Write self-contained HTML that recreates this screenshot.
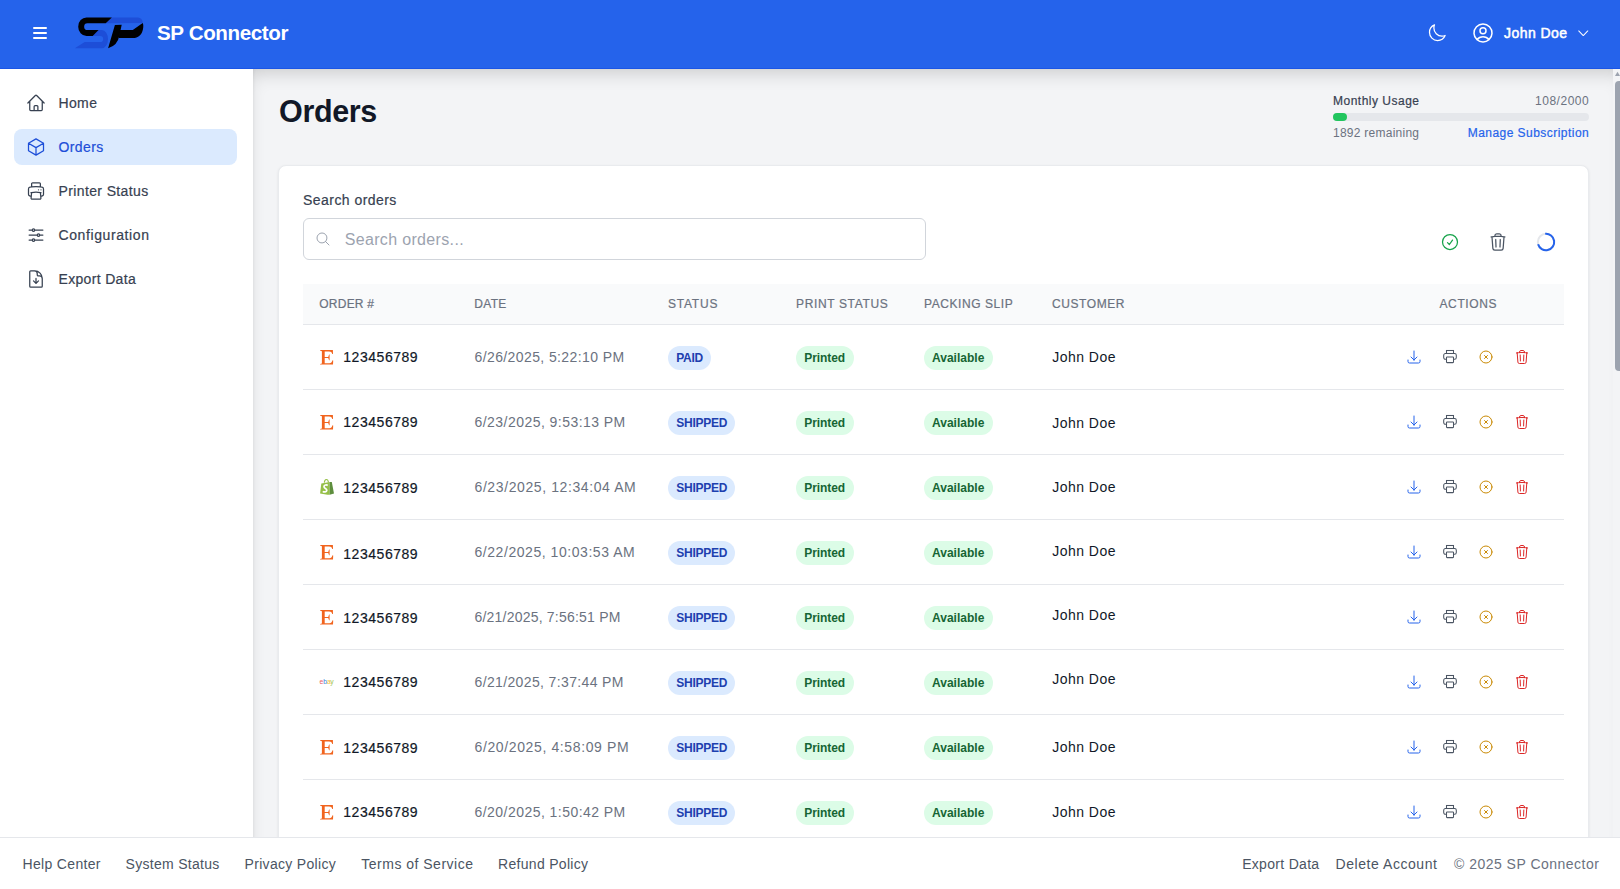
<!DOCTYPE html>
<html><head><meta charset="utf-8"><title>Orders - SP Connector</title>
<style>
html,body{margin:0;padding:0;width:1620px;height:889px;overflow:hidden;background:#f3f4f6;}
body{position:relative;font-family:"Liberation Sans",sans-serif;}
.a{position:absolute;}
.t{position:absolute;white-space:nowrap;line-height:normal;}
</style></head><body>
<div class="a" style="left:253px;top:69px;width:1367px;height:820px;background:#f3f4f6;box-shadow:inset 0 10px 20px -8px rgba(0,0,0,0.2), inset 2px 0 3px -1px rgba(0,0,0,0.05);"></div>
<div class="t" style="left:279.00px;top:93.81px;font-size:30.5px;color:#111827;letter-spacing:-0.346px;font-weight:700;">Orders</div>
<div class="t" style="left:1333.00px;top:93.95px;font-size:12px;color:#374151;letter-spacing:0.497px;-webkit-text-stroke:0.2px currentColor;">Monthly Usage</div>
<div class="t" style="left:1535.00px;top:93.95px;font-size:12px;color:#6b7280;letter-spacing:0.524px;">108/2000</div>
<div class="a" style="left:1333px;top:113px;width:256px;height:8px;background:#e5e7eb;border-radius:4px;"></div>
<div class="a" style="left:1333px;top:113px;width:14px;height:8px;background:#22c55e;border-radius:4px;"></div>
<div class="t" style="left:1333.00px;top:125.95px;font-size:12px;color:#6b7280;letter-spacing:0.252px;">1892 remaining</div>
<div class="t" style="left:1467.70px;top:125.95px;font-size:12px;color:#2563eb;letter-spacing:0.460px;-webkit-text-stroke:0.2px currentColor;">Manage Subscription</div>
<div class="a" style="left:278px;top:165px;width:1311px;height:740px;background:#fff;border:1px solid #e9ebee;box-sizing:border-box;border-radius:8px;box-shadow:0 1px 3px rgba(0,0,0,0.08);"></div>
<div class="t" style="left:303.00px;top:192.11px;font-size:14px;color:#374151;letter-spacing:0.451px;-webkit-text-stroke:0.2px currentColor;">Search orders</div>
<div class="a" style="left:303px;top:218px;width:623px;height:42px;border:1px solid #d1d5db;box-sizing:border-box;border-radius:6px;background:#fff;"></div>
<svg class="a" style="left:315px;top:231px" width="16" height="16" viewBox="0 0 24 24" fill="none" stroke="#9ca3af" stroke-width="1.5" stroke-linecap="round" stroke-linejoin="round"><path d="m21 21-5.197-5.197m0 0A7.5 7.5 0 1 0 5.196 5.196a7.5 7.5 0 0 0 10.607 10.607Z"/></svg>
<div class="t" style="left:344.70px;top:231.06px;font-size:16px;color:#9ca3af;letter-spacing:0.340px;">Search orders...</div>
<svg class="a" style="left:1440px;top:232px" width="20" height="20" viewBox="0 0 24 24" fill="none" stroke="#16a34a" stroke-width="1.5" stroke-linecap="round" stroke-linejoin="round"><path d="M9 12.75 11.25 15 15 9.75M21 12a9 9 0 1 1-18 0 9 9 0 0 1 18 0Z"/></svg>
<svg class="a" style="left:1488px;top:232px" width="20" height="20" viewBox="0 0 24 24" fill="none" stroke="#4b5563" stroke-width="1.5" stroke-linecap="round" stroke-linejoin="round"><path d="m14.74 9-.346 9m-4.788 0L9.26 9m9.968-3.21c.342.052.682.107 1.022.166m-1.022-.165L18.16 19.673a2.25 2.25 0 0 1-2.244 2.077H8.084a2.25 2.25 0 0 1-2.244-2.077L4.772 5.79m14.456 0a48.108 48.108 0 0 0-3.478-.397m-12 .562c.34-.059.68-.114 1.022-.165m0 0a48.11 48.11 0 0 1 3.478-.397m7.5 0v-.916c0-1.18-.91-2.164-2.09-2.201a51.964 51.964 0 0 0-3.32 0c-1.18.037-2.09 1.022-2.09 2.201v.916m7.5 0a48.667 48.667 0 0 0-7.5 0"/></svg>
<svg class="a" style="left:1536px;top:232px" width="20" height="20" viewBox="0 0 20 20"><circle cx="10" cy="10" r="8.2" fill="none" stroke="#e5e7eb" stroke-width="2"/><path d="M9.2 1.84 A8.2 8.2 0 1 1 2.1 12.2" fill="none" stroke="#2563eb" stroke-width="2"/></svg>
<div class="a" style="left:303px;top:284px;width:1261px;height:40px;background:#f9fafb;"></div>
<div class="a" style="left:303px;top:324px;width:1261px;height:1px;background:#e5e7eb;"></div>
<div class="t" style="left:319.30px;top:297.25px;font-size:12px;color:#6b7280;letter-spacing:0.226px;-webkit-text-stroke:0.2px currentColor;">ORDER #</div>
<div class="t" style="left:474.30px;top:297.25px;font-size:12px;color:#6b7280;letter-spacing:0.297px;-webkit-text-stroke:0.2px currentColor;">DATE</div>
<div class="t" style="left:668.00px;top:297.25px;font-size:12px;color:#6b7280;letter-spacing:0.771px;-webkit-text-stroke:0.2px currentColor;">STATUS</div>
<div class="t" style="left:796.00px;top:297.25px;font-size:12px;color:#6b7280;letter-spacing:0.640px;-webkit-text-stroke:0.2px currentColor;">PRINT STATUS</div>
<div class="t" style="left:924.00px;top:297.25px;font-size:12px;color:#6b7280;letter-spacing:0.569px;-webkit-text-stroke:0.2px currentColor;">PACKING SLIP</div>
<div class="t" style="left:1052.00px;top:297.25px;font-size:12px;color:#6b7280;letter-spacing:0.578px;-webkit-text-stroke:0.2px currentColor;">CUSTOMER</div>
<div class="t" style="left:1439.50px;top:297.25px;font-size:12px;color:#6b7280;letter-spacing:0.612px;-webkit-text-stroke:0.2px currentColor;">ACTIONS</div>
<div class="a" style="left:303px;top:389px;width:1261px;height:1px;background:#e5e7eb;"></div>
<svg class="a" style="left:320px;top:349.5px" width="14" height="15" viewBox="0 0 14 15"><path d="M0.2,0.1 L12.9,0 L13,4 L12.3,4.1 C11.8,2.1 11,1.4 9,1.4 L4.7,1.4 L4.7,7 L8.2,7 L9.1,4.6 L9.6,4.6 L9.6,10.2 L9.1,10.2 L8.2,7.9 L4.7,7.9 L4.7,13.25 L9.3,13.25 C11.2,13.25 11.9,12.4 12.5,10.3 L13.2,10.4 L13,14.6 L0.1,14.6 L0.1,13.95 L1.9,13.4 L1.9,1.2 L0.2,0.75 Z" fill="#f1641e"/></svg>
<div class="t" style="left:343.30px;top:349.11px;font-size:14px;color:#111827;letter-spacing:0.534px;-webkit-text-stroke:0.2px currentColor;">123456789</div>
<div class="t" style="left:474.50px;top:348.81px;font-size:14px;color:#6b7280;letter-spacing:0.395px;">6/26/2025, 5:22:10 PM</div>
<div class="a" style="left:668px;top:346px;width:43px;height:24px;background:#dbeafe;border-radius:12px;"></div>
<div class="t" style="left:676.20px;top:351.15px;font-size:12px;color:#1e40af;letter-spacing:-0.260px;font-weight:700;">PAID</div>
<div class="a" style="left:796px;top:346px;width:58px;height:24px;background:#dcfce7;border-radius:12px;"></div>
<div class="t" style="left:804.20px;top:351.15px;font-size:12px;color:#166534;letter-spacing:-0.055px;font-weight:700;">Printed</div>
<div class="a" style="left:924px;top:346px;width:69px;height:24px;background:#dcfce7;border-radius:12px;"></div>
<div class="t" style="left:932.00px;top:351.15px;font-size:12px;color:#166534;letter-spacing:0.008px;font-weight:700;">Available</div>
<div class="t" style="left:1052.20px;top:349.01px;font-size:14px;color:#111827;letter-spacing:0.485px;">John Doe</div>
<svg class="a" style="left:1406px;top:349.3px" width="16" height="16" viewBox="0 0 24 24" fill="none" stroke="#2563eb" stroke-width="1.5" stroke-linecap="round" stroke-linejoin="round"><path d="M3 16.5v2.25A2.25 2.25 0 0 0 5.25 21h13.5A2.25 2.25 0 0 0 21 18.75V16.5M16.5 12 12 16.5m0 0L7.5 12m4.5 4.5V3"/></svg>
<svg class="a" style="left:1442px;top:348.3px" width="16" height="16" viewBox="0 0 16 16" fill="none" stroke="#4b5563" stroke-width="1.05"><rect x="4.5" y="2.5" width="7" height="3"/><path d="M4.5,11.3 H3.4 A1.7,1.7 0 0 1 1.7,9.6 V7.2 A1.7,1.7 0 0 1 3.4,5.5 H12.6 A1.7,1.7 0 0 1 14.3,7.2 V9.6 A1.7,1.7 0 0 1 12.6,11.3 H11.5"/><rect x="4.5" y="9" width="7" height="5.6" rx="0.6"/></svg>
<svg class="a" style="left:1478px;top:349px" width="16" height="16" viewBox="0 0 24 24" fill="none" stroke="#ca8a04" stroke-width="1.5" stroke-linecap="round" stroke-linejoin="round"><path d="m9.75 9.75 4.5 4.5m0-4.5-4.5 4.5M21 12a9 9 0 1 1-18 0 9 9 0 0 1 18 0Z"/></svg>
<svg class="a" style="left:1514px;top:349px" width="16" height="16" viewBox="0 0 24 24" fill="none" stroke="#dc2626" stroke-width="1.5" stroke-linecap="round" stroke-linejoin="round"><path d="m14.74 9-.346 9m-4.788 0L9.26 9m9.968-3.21c.342.052.682.107 1.022.166m-1.022-.165L18.16 19.673a2.25 2.25 0 0 1-2.244 2.077H8.084a2.25 2.25 0 0 1-2.244-2.077L4.772 5.79m14.456 0a48.108 48.108 0 0 0-3.478-.397m-12 .562c.34-.059.68-.114 1.022-.165m0 0a48.11 48.11 0 0 1 3.478-.397m7.5 0v-.916c0-1.18-.91-2.164-2.09-2.201a51.964 51.964 0 0 0-3.32 0c-1.18.037-2.09 1.022-2.09 2.201v.916m7.5 0a48.667 48.667 0 0 0-7.5 0"/></svg>
<div class="a" style="left:303px;top:454px;width:1261px;height:1px;background:#e5e7eb;"></div>
<svg class="a" style="left:320px;top:414.5px" width="14" height="15" viewBox="0 0 14 15"><path d="M0.2,0.1 L12.9,0 L13,4 L12.3,4.1 C11.8,2.1 11,1.4 9,1.4 L4.7,1.4 L4.7,7 L8.2,7 L9.1,4.6 L9.6,4.6 L9.6,10.2 L9.1,10.2 L8.2,7.9 L4.7,7.9 L4.7,13.25 L9.3,13.25 C11.2,13.25 11.9,12.4 12.5,10.3 L13.2,10.4 L13,14.6 L0.1,14.6 L0.1,13.95 L1.9,13.4 L1.9,1.2 L0.2,0.75 Z" fill="#f1641e"/></svg>
<div class="t" style="left:343.30px;top:413.81px;font-size:14px;color:#111827;letter-spacing:0.534px;-webkit-text-stroke:0.2px currentColor;">123456789</div>
<div class="t" style="left:474.50px;top:413.81px;font-size:14px;color:#6b7280;letter-spacing:0.455px;">6/23/2025, 9:53:13 PM</div>
<div class="a" style="left:668px;top:411px;width:67px;height:24px;background:#dbeafe;border-radius:12px;"></div>
<div class="t" style="left:676.20px;top:416.15px;font-size:12px;color:#1e40af;letter-spacing:-0.229px;font-weight:700;">SHIPPED</div>
<div class="a" style="left:796px;top:411px;width:58px;height:24px;background:#dcfce7;border-radius:12px;"></div>
<div class="t" style="left:804.20px;top:416.15px;font-size:12px;color:#166534;letter-spacing:-0.055px;font-weight:700;">Printed</div>
<div class="a" style="left:924px;top:411px;width:69px;height:24px;background:#dcfce7;border-radius:12px;"></div>
<div class="t" style="left:932.00px;top:416.15px;font-size:12px;color:#166534;letter-spacing:0.008px;font-weight:700;">Available</div>
<div class="t" style="left:1052.20px;top:414.81px;font-size:14px;color:#111827;letter-spacing:0.485px;">John Doe</div>
<svg class="a" style="left:1406px;top:414.3px" width="16" height="16" viewBox="0 0 24 24" fill="none" stroke="#2563eb" stroke-width="1.5" stroke-linecap="round" stroke-linejoin="round"><path d="M3 16.5v2.25A2.25 2.25 0 0 0 5.25 21h13.5A2.25 2.25 0 0 0 21 18.75V16.5M16.5 12 12 16.5m0 0L7.5 12m4.5 4.5V3"/></svg>
<svg class="a" style="left:1442px;top:413.3px" width="16" height="16" viewBox="0 0 16 16" fill="none" stroke="#4b5563" stroke-width="1.05"><rect x="4.5" y="2.5" width="7" height="3"/><path d="M4.5,11.3 H3.4 A1.7,1.7 0 0 1 1.7,9.6 V7.2 A1.7,1.7 0 0 1 3.4,5.5 H12.6 A1.7,1.7 0 0 1 14.3,7.2 V9.6 A1.7,1.7 0 0 1 12.6,11.3 H11.5"/><rect x="4.5" y="9" width="7" height="5.6" rx="0.6"/></svg>
<svg class="a" style="left:1478px;top:414px" width="16" height="16" viewBox="0 0 24 24" fill="none" stroke="#ca8a04" stroke-width="1.5" stroke-linecap="round" stroke-linejoin="round"><path d="m9.75 9.75 4.5 4.5m0-4.5-4.5 4.5M21 12a9 9 0 1 1-18 0 9 9 0 0 1 18 0Z"/></svg>
<svg class="a" style="left:1514px;top:414px" width="16" height="16" viewBox="0 0 24 24" fill="none" stroke="#dc2626" stroke-width="1.5" stroke-linecap="round" stroke-linejoin="round"><path d="m14.74 9-.346 9m-4.788 0L9.26 9m9.968-3.21c.342.052.682.107 1.022.166m-1.022-.165L18.16 19.673a2.25 2.25 0 0 1-2.244 2.077H8.084a2.25 2.25 0 0 1-2.244-2.077L4.772 5.79m14.456 0a48.108 48.108 0 0 0-3.478-.397m-12 .562c.34-.059.68-.114 1.022-.165m0 0a48.11 48.11 0 0 1 3.478-.397m7.5 0v-.916c0-1.18-.91-2.164-2.09-2.201a51.964 51.964 0 0 0-3.32 0c-1.18.037-2.09 1.022-2.09 2.201v.916m7.5 0a48.667 48.667 0 0 0-7.5 0"/></svg>
<div class="a" style="left:303px;top:519px;width:1261px;height:1px;background:#e5e7eb;"></div>
<svg class="a" style="left:319px;top:478px" width="16" height="18" viewBox="0 0 16 18"><path d="M5.3,4.6 C5.5,2.4 6.3,1.5 7.3,1.5 C8.4,1.5 9.2,2.4 9.5,4.4" fill="none" stroke="#95bf47" stroke-width="1.1"/><path d="M2.3,5.4 L10.6,3.9 L10.6,16.7 L8.5,16.7 L1.1,15.4 Z" fill="#95bf47"/><path d="M10.6,3.9 L12.8,4.1 L15,15.6 L10.6,16.7 Z" fill="#5e8e3e"/><path d="M8.7,7.5 C7.7,6.6 5.1,6.8 5,8.6 C4.9,10.5 8,10.4 7.8,12.3 C7.6,14.2 5,14.3 3.8,13.3" fill="none" stroke="#fff" stroke-width="1.7"/></svg>
<div class="t" style="left:343.30px;top:479.61px;font-size:14px;color:#111827;letter-spacing:0.534px;-webkit-text-stroke:0.2px currentColor;">123456789</div>
<div class="t" style="left:474.50px;top:478.81px;font-size:14px;color:#6b7280;letter-spacing:0.599px;">6/23/2025, 12:34:04 AM</div>
<div class="a" style="left:668px;top:476px;width:67px;height:24px;background:#dbeafe;border-radius:12px;"></div>
<div class="t" style="left:676.20px;top:481.15px;font-size:12px;color:#1e40af;letter-spacing:-0.229px;font-weight:700;">SHIPPED</div>
<div class="a" style="left:796px;top:476px;width:58px;height:24px;background:#dcfce7;border-radius:12px;"></div>
<div class="t" style="left:804.20px;top:481.15px;font-size:12px;color:#166534;letter-spacing:-0.055px;font-weight:700;">Printed</div>
<div class="a" style="left:924px;top:476px;width:69px;height:24px;background:#dcfce7;border-radius:12px;"></div>
<div class="t" style="left:932.00px;top:481.15px;font-size:12px;color:#166534;letter-spacing:0.008px;font-weight:700;">Available</div>
<div class="t" style="left:1052.20px;top:479.01px;font-size:14px;color:#111827;letter-spacing:0.485px;">John Doe</div>
<svg class="a" style="left:1406px;top:479.3px" width="16" height="16" viewBox="0 0 24 24" fill="none" stroke="#2563eb" stroke-width="1.5" stroke-linecap="round" stroke-linejoin="round"><path d="M3 16.5v2.25A2.25 2.25 0 0 0 5.25 21h13.5A2.25 2.25 0 0 0 21 18.75V16.5M16.5 12 12 16.5m0 0L7.5 12m4.5 4.5V3"/></svg>
<svg class="a" style="left:1442px;top:478.3px" width="16" height="16" viewBox="0 0 16 16" fill="none" stroke="#4b5563" stroke-width="1.05"><rect x="4.5" y="2.5" width="7" height="3"/><path d="M4.5,11.3 H3.4 A1.7,1.7 0 0 1 1.7,9.6 V7.2 A1.7,1.7 0 0 1 3.4,5.5 H12.6 A1.7,1.7 0 0 1 14.3,7.2 V9.6 A1.7,1.7 0 0 1 12.6,11.3 H11.5"/><rect x="4.5" y="9" width="7" height="5.6" rx="0.6"/></svg>
<svg class="a" style="left:1478px;top:479px" width="16" height="16" viewBox="0 0 24 24" fill="none" stroke="#ca8a04" stroke-width="1.5" stroke-linecap="round" stroke-linejoin="round"><path d="m9.75 9.75 4.5 4.5m0-4.5-4.5 4.5M21 12a9 9 0 1 1-18 0 9 9 0 0 1 18 0Z"/></svg>
<svg class="a" style="left:1514px;top:479px" width="16" height="16" viewBox="0 0 24 24" fill="none" stroke="#dc2626" stroke-width="1.5" stroke-linecap="round" stroke-linejoin="round"><path d="m14.74 9-.346 9m-4.788 0L9.26 9m9.968-3.21c.342.052.682.107 1.022.166m-1.022-.165L18.16 19.673a2.25 2.25 0 0 1-2.244 2.077H8.084a2.25 2.25 0 0 1-2.244-2.077L4.772 5.79m14.456 0a48.108 48.108 0 0 0-3.478-.397m-12 .562c.34-.059.68-.114 1.022-.165m0 0a48.11 48.11 0 0 1 3.478-.397m7.5 0v-.916c0-1.18-.91-2.164-2.09-2.201a51.964 51.964 0 0 0-3.32 0c-1.18.037-2.09 1.022-2.09 2.201v.916m7.5 0a48.667 48.667 0 0 0-7.5 0"/></svg>
<div class="a" style="left:303px;top:584px;width:1261px;height:1px;background:#e5e7eb;"></div>
<svg class="a" style="left:320px;top:544.5px" width="14" height="15" viewBox="0 0 14 15"><path d="M0.2,0.1 L12.9,0 L13,4 L12.3,4.1 C11.8,2.1 11,1.4 9,1.4 L4.7,1.4 L4.7,7 L8.2,7 L9.1,4.6 L9.6,4.6 L9.6,10.2 L9.1,10.2 L8.2,7.9 L4.7,7.9 L4.7,13.25 L9.3,13.25 C11.2,13.25 11.9,12.4 12.5,10.3 L13.2,10.4 L13,14.6 L0.1,14.6 L0.1,13.95 L1.9,13.4 L1.9,1.2 L0.2,0.75 Z" fill="#f1641e"/></svg>
<div class="t" style="left:343.30px;top:545.81px;font-size:14px;color:#111827;letter-spacing:0.534px;-webkit-text-stroke:0.2px currentColor;">123456789</div>
<div class="t" style="left:474.50px;top:543.81px;font-size:14px;color:#6b7280;letter-spacing:0.551px;">6/22/2025, 10:03:53 AM</div>
<div class="a" style="left:668px;top:541px;width:67px;height:24px;background:#dbeafe;border-radius:12px;"></div>
<div class="t" style="left:676.20px;top:546.15px;font-size:12px;color:#1e40af;letter-spacing:-0.229px;font-weight:700;">SHIPPED</div>
<div class="a" style="left:796px;top:541px;width:58px;height:24px;background:#dcfce7;border-radius:12px;"></div>
<div class="t" style="left:804.20px;top:546.15px;font-size:12px;color:#166534;letter-spacing:-0.055px;font-weight:700;">Printed</div>
<div class="a" style="left:924px;top:541px;width:69px;height:24px;background:#dcfce7;border-radius:12px;"></div>
<div class="t" style="left:932.00px;top:546.15px;font-size:12px;color:#166534;letter-spacing:0.008px;font-weight:700;">Available</div>
<div class="t" style="left:1052.20px;top:542.81px;font-size:14px;color:#111827;letter-spacing:0.485px;">John Doe</div>
<svg class="a" style="left:1406px;top:544.3px" width="16" height="16" viewBox="0 0 24 24" fill="none" stroke="#2563eb" stroke-width="1.5" stroke-linecap="round" stroke-linejoin="round"><path d="M3 16.5v2.25A2.25 2.25 0 0 0 5.25 21h13.5A2.25 2.25 0 0 0 21 18.75V16.5M16.5 12 12 16.5m0 0L7.5 12m4.5 4.5V3"/></svg>
<svg class="a" style="left:1442px;top:543.3px" width="16" height="16" viewBox="0 0 16 16" fill="none" stroke="#4b5563" stroke-width="1.05"><rect x="4.5" y="2.5" width="7" height="3"/><path d="M4.5,11.3 H3.4 A1.7,1.7 0 0 1 1.7,9.6 V7.2 A1.7,1.7 0 0 1 3.4,5.5 H12.6 A1.7,1.7 0 0 1 14.3,7.2 V9.6 A1.7,1.7 0 0 1 12.6,11.3 H11.5"/><rect x="4.5" y="9" width="7" height="5.6" rx="0.6"/></svg>
<svg class="a" style="left:1478px;top:544px" width="16" height="16" viewBox="0 0 24 24" fill="none" stroke="#ca8a04" stroke-width="1.5" stroke-linecap="round" stroke-linejoin="round"><path d="m9.75 9.75 4.5 4.5m0-4.5-4.5 4.5M21 12a9 9 0 1 1-18 0 9 9 0 0 1 18 0Z"/></svg>
<svg class="a" style="left:1514px;top:544px" width="16" height="16" viewBox="0 0 24 24" fill="none" stroke="#dc2626" stroke-width="1.5" stroke-linecap="round" stroke-linejoin="round"><path d="m14.74 9-.346 9m-4.788 0L9.26 9m9.968-3.21c.342.052.682.107 1.022.166m-1.022-.165L18.16 19.673a2.25 2.25 0 0 1-2.244 2.077H8.084a2.25 2.25 0 0 1-2.244-2.077L4.772 5.79m14.456 0a48.108 48.108 0 0 0-3.478-.397m-12 .562c.34-.059.68-.114 1.022-.165m0 0a48.11 48.11 0 0 1 3.478-.397m7.5 0v-.916c0-1.18-.91-2.164-2.09-2.201a51.964 51.964 0 0 0-3.32 0c-1.18.037-2.09 1.022-2.09 2.201v.916m7.5 0a48.667 48.667 0 0 0-7.5 0"/></svg>
<div class="a" style="left:303px;top:649px;width:1261px;height:1px;background:#e5e7eb;"></div>
<svg class="a" style="left:320px;top:609.5px" width="14" height="15" viewBox="0 0 14 15"><path d="M0.2,0.1 L12.9,0 L13,4 L12.3,4.1 C11.8,2.1 11,1.4 9,1.4 L4.7,1.4 L4.7,7 L8.2,7 L9.1,4.6 L9.6,4.6 L9.6,10.2 L9.1,10.2 L8.2,7.9 L4.7,7.9 L4.7,13.25 L9.3,13.25 C11.2,13.25 11.9,12.4 12.5,10.3 L13.2,10.4 L13,14.6 L0.1,14.6 L0.1,13.95 L1.9,13.4 L1.9,1.2 L0.2,0.75 Z" fill="#f1641e"/></svg>
<div class="t" style="left:343.30px;top:609.61px;font-size:14px;color:#111827;letter-spacing:0.534px;-webkit-text-stroke:0.2px currentColor;">123456789</div>
<div class="t" style="left:474.50px;top:608.81px;font-size:14px;color:#6b7280;letter-spacing:0.210px;">6/21/2025, 7:56:51 PM</div>
<div class="a" style="left:668px;top:606px;width:67px;height:24px;background:#dbeafe;border-radius:12px;"></div>
<div class="t" style="left:676.20px;top:611.15px;font-size:12px;color:#1e40af;letter-spacing:-0.229px;font-weight:700;">SHIPPED</div>
<div class="a" style="left:796px;top:606px;width:58px;height:24px;background:#dcfce7;border-radius:12px;"></div>
<div class="t" style="left:804.20px;top:611.15px;font-size:12px;color:#166534;letter-spacing:-0.055px;font-weight:700;">Printed</div>
<div class="a" style="left:924px;top:606px;width:69px;height:24px;background:#dcfce7;border-radius:12px;"></div>
<div class="t" style="left:932.00px;top:611.15px;font-size:12px;color:#166534;letter-spacing:0.008px;font-weight:700;">Available</div>
<div class="t" style="left:1052.20px;top:607.11px;font-size:14px;color:#111827;letter-spacing:0.485px;">John Doe</div>
<svg class="a" style="left:1406px;top:609.3px" width="16" height="16" viewBox="0 0 24 24" fill="none" stroke="#2563eb" stroke-width="1.5" stroke-linecap="round" stroke-linejoin="round"><path d="M3 16.5v2.25A2.25 2.25 0 0 0 5.25 21h13.5A2.25 2.25 0 0 0 21 18.75V16.5M16.5 12 12 16.5m0 0L7.5 12m4.5 4.5V3"/></svg>
<svg class="a" style="left:1442px;top:608.3px" width="16" height="16" viewBox="0 0 16 16" fill="none" stroke="#4b5563" stroke-width="1.05"><rect x="4.5" y="2.5" width="7" height="3"/><path d="M4.5,11.3 H3.4 A1.7,1.7 0 0 1 1.7,9.6 V7.2 A1.7,1.7 0 0 1 3.4,5.5 H12.6 A1.7,1.7 0 0 1 14.3,7.2 V9.6 A1.7,1.7 0 0 1 12.6,11.3 H11.5"/><rect x="4.5" y="9" width="7" height="5.6" rx="0.6"/></svg>
<svg class="a" style="left:1478px;top:609px" width="16" height="16" viewBox="0 0 24 24" fill="none" stroke="#ca8a04" stroke-width="1.5" stroke-linecap="round" stroke-linejoin="round"><path d="m9.75 9.75 4.5 4.5m0-4.5-4.5 4.5M21 12a9 9 0 1 1-18 0 9 9 0 0 1 18 0Z"/></svg>
<svg class="a" style="left:1514px;top:609px" width="16" height="16" viewBox="0 0 24 24" fill="none" stroke="#dc2626" stroke-width="1.5" stroke-linecap="round" stroke-linejoin="round"><path d="m14.74 9-.346 9m-4.788 0L9.26 9m9.968-3.21c.342.052.682.107 1.022.166m-1.022-.165L18.16 19.673a2.25 2.25 0 0 1-2.244 2.077H8.084a2.25 2.25 0 0 1-2.244-2.077L4.772 5.79m14.456 0a48.108 48.108 0 0 0-3.478-.397m-12 .562c.34-.059.68-.114 1.022-.165m0 0a48.11 48.11 0 0 1 3.478-.397m7.5 0v-.916c0-1.18-.91-2.164-2.09-2.201a51.964 51.964 0 0 0-3.32 0c-1.18.037-2.09 1.022-2.09 2.201v.916m7.5 0a48.667 48.667 0 0 0-7.5 0"/></svg>
<div class="a" style="left:303px;top:714px;width:1261px;height:1px;background:#e5e7eb;"></div>
<svg class="a" style="left:319px;top:676px;opacity:.8" width="16" height="10" viewBox="0 0 16 10"><text x="0.6" y="7.6" font-family="Liberation Sans" font-size="6.8" font-weight="400" fill="#e53238">e</text><text x="4.2" y="7.6" font-family="Liberation Sans" font-size="6.8" fill="#0064d2">b</text><text x="8" y="7.6" font-family="Liberation Sans" font-size="6.8" fill="#f5af02">a</text><text x="11.3" y="7.6" font-family="Liberation Sans" font-size="6.8" fill="#86b817">y</text></svg>
<div class="t" style="left:343.30px;top:673.81px;font-size:14px;color:#111827;letter-spacing:0.534px;-webkit-text-stroke:0.2px currentColor;">123456789</div>
<div class="t" style="left:474.50px;top:673.81px;font-size:14px;color:#6b7280;letter-spacing:0.365px;">6/21/2025, 7:37:44 PM</div>
<div class="a" style="left:668px;top:671px;width:67px;height:24px;background:#dbeafe;border-radius:12px;"></div>
<div class="t" style="left:676.20px;top:676.15px;font-size:12px;color:#1e40af;letter-spacing:-0.229px;font-weight:700;">SHIPPED</div>
<div class="a" style="left:796px;top:671px;width:58px;height:24px;background:#dcfce7;border-radius:12px;"></div>
<div class="t" style="left:804.20px;top:676.15px;font-size:12px;color:#166534;letter-spacing:-0.055px;font-weight:700;">Printed</div>
<div class="a" style="left:924px;top:671px;width:69px;height:24px;background:#dcfce7;border-radius:12px;"></div>
<div class="t" style="left:932.00px;top:676.15px;font-size:12px;color:#166534;letter-spacing:0.008px;font-weight:700;">Available</div>
<div class="t" style="left:1052.20px;top:670.91px;font-size:14px;color:#111827;letter-spacing:0.485px;">John Doe</div>
<svg class="a" style="left:1406px;top:674.3px" width="16" height="16" viewBox="0 0 24 24" fill="none" stroke="#2563eb" stroke-width="1.5" stroke-linecap="round" stroke-linejoin="round"><path d="M3 16.5v2.25A2.25 2.25 0 0 0 5.25 21h13.5A2.25 2.25 0 0 0 21 18.75V16.5M16.5 12 12 16.5m0 0L7.5 12m4.5 4.5V3"/></svg>
<svg class="a" style="left:1442px;top:673.3px" width="16" height="16" viewBox="0 0 16 16" fill="none" stroke="#4b5563" stroke-width="1.05"><rect x="4.5" y="2.5" width="7" height="3"/><path d="M4.5,11.3 H3.4 A1.7,1.7 0 0 1 1.7,9.6 V7.2 A1.7,1.7 0 0 1 3.4,5.5 H12.6 A1.7,1.7 0 0 1 14.3,7.2 V9.6 A1.7,1.7 0 0 1 12.6,11.3 H11.5"/><rect x="4.5" y="9" width="7" height="5.6" rx="0.6"/></svg>
<svg class="a" style="left:1478px;top:674px" width="16" height="16" viewBox="0 0 24 24" fill="none" stroke="#ca8a04" stroke-width="1.5" stroke-linecap="round" stroke-linejoin="round"><path d="m9.75 9.75 4.5 4.5m0-4.5-4.5 4.5M21 12a9 9 0 1 1-18 0 9 9 0 0 1 18 0Z"/></svg>
<svg class="a" style="left:1514px;top:674px" width="16" height="16" viewBox="0 0 24 24" fill="none" stroke="#dc2626" stroke-width="1.5" stroke-linecap="round" stroke-linejoin="round"><path d="m14.74 9-.346 9m-4.788 0L9.26 9m9.968-3.21c.342.052.682.107 1.022.166m-1.022-.165L18.16 19.673a2.25 2.25 0 0 1-2.244 2.077H8.084a2.25 2.25 0 0 1-2.244-2.077L4.772 5.79m14.456 0a48.108 48.108 0 0 0-3.478-.397m-12 .562c.34-.059.68-.114 1.022-.165m0 0a48.11 48.11 0 0 1 3.478-.397m7.5 0v-.916c0-1.18-.91-2.164-2.09-2.201a51.964 51.964 0 0 0-3.32 0c-1.18.037-2.09 1.022-2.09 2.201v.916m7.5 0a48.667 48.667 0 0 0-7.5 0"/></svg>
<div class="a" style="left:303px;top:779px;width:1261px;height:1px;background:#e5e7eb;"></div>
<svg class="a" style="left:320px;top:739.5px" width="14" height="15" viewBox="0 0 14 15"><path d="M0.2,0.1 L12.9,0 L13,4 L12.3,4.1 C11.8,2.1 11,1.4 9,1.4 L4.7,1.4 L4.7,7 L8.2,7 L9.1,4.6 L9.6,4.6 L9.6,10.2 L9.1,10.2 L8.2,7.9 L4.7,7.9 L4.7,13.25 L9.3,13.25 C11.2,13.25 11.9,12.4 12.5,10.3 L13.2,10.4 L13,14.6 L0.1,14.6 L0.1,13.95 L1.9,13.4 L1.9,1.2 L0.2,0.75 Z" fill="#f1641e"/></svg>
<div class="t" style="left:343.30px;top:739.61px;font-size:14px;color:#111827;letter-spacing:0.534px;-webkit-text-stroke:0.2px currentColor;">123456789</div>
<div class="t" style="left:474.50px;top:738.81px;font-size:14px;color:#6b7280;letter-spacing:0.625px;">6/20/2025, 4:58:09 PM</div>
<div class="a" style="left:668px;top:736px;width:67px;height:24px;background:#dbeafe;border-radius:12px;"></div>
<div class="t" style="left:676.20px;top:741.15px;font-size:12px;color:#1e40af;letter-spacing:-0.229px;font-weight:700;">SHIPPED</div>
<div class="a" style="left:796px;top:736px;width:58px;height:24px;background:#dcfce7;border-radius:12px;"></div>
<div class="t" style="left:804.20px;top:741.15px;font-size:12px;color:#166534;letter-spacing:-0.055px;font-weight:700;">Printed</div>
<div class="a" style="left:924px;top:736px;width:69px;height:24px;background:#dcfce7;border-radius:12px;"></div>
<div class="t" style="left:932.00px;top:741.15px;font-size:12px;color:#166534;letter-spacing:0.008px;font-weight:700;">Available</div>
<div class="t" style="left:1052.20px;top:739.01px;font-size:14px;color:#111827;letter-spacing:0.485px;">John Doe</div>
<svg class="a" style="left:1406px;top:739.3px" width="16" height="16" viewBox="0 0 24 24" fill="none" stroke="#2563eb" stroke-width="1.5" stroke-linecap="round" stroke-linejoin="round"><path d="M3 16.5v2.25A2.25 2.25 0 0 0 5.25 21h13.5A2.25 2.25 0 0 0 21 18.75V16.5M16.5 12 12 16.5m0 0L7.5 12m4.5 4.5V3"/></svg>
<svg class="a" style="left:1442px;top:738.3px" width="16" height="16" viewBox="0 0 16 16" fill="none" stroke="#4b5563" stroke-width="1.05"><rect x="4.5" y="2.5" width="7" height="3"/><path d="M4.5,11.3 H3.4 A1.7,1.7 0 0 1 1.7,9.6 V7.2 A1.7,1.7 0 0 1 3.4,5.5 H12.6 A1.7,1.7 0 0 1 14.3,7.2 V9.6 A1.7,1.7 0 0 1 12.6,11.3 H11.5"/><rect x="4.5" y="9" width="7" height="5.6" rx="0.6"/></svg>
<svg class="a" style="left:1478px;top:739px" width="16" height="16" viewBox="0 0 24 24" fill="none" stroke="#ca8a04" stroke-width="1.5" stroke-linecap="round" stroke-linejoin="round"><path d="m9.75 9.75 4.5 4.5m0-4.5-4.5 4.5M21 12a9 9 0 1 1-18 0 9 9 0 0 1 18 0Z"/></svg>
<svg class="a" style="left:1514px;top:739px" width="16" height="16" viewBox="0 0 24 24" fill="none" stroke="#dc2626" stroke-width="1.5" stroke-linecap="round" stroke-linejoin="round"><path d="m14.74 9-.346 9m-4.788 0L9.26 9m9.968-3.21c.342.052.682.107 1.022.166m-1.022-.165L18.16 19.673a2.25 2.25 0 0 1-2.244 2.077H8.084a2.25 2.25 0 0 1-2.244-2.077L4.772 5.79m14.456 0a48.108 48.108 0 0 0-3.478-.397m-12 .562c.34-.059.68-.114 1.022-.165m0 0a48.11 48.11 0 0 1 3.478-.397m7.5 0v-.916c0-1.18-.91-2.164-2.09-2.201a51.964 51.964 0 0 0-3.32 0c-1.18.037-2.09 1.022-2.09 2.201v.916m7.5 0a48.667 48.667 0 0 0-7.5 0"/></svg>
<div class="a" style="left:303px;top:844px;width:1261px;height:1px;background:#e5e7eb;"></div>
<svg class="a" style="left:320px;top:804.5px" width="14" height="15" viewBox="0 0 14 15"><path d="M0.2,0.1 L12.9,0 L13,4 L12.3,4.1 C11.8,2.1 11,1.4 9,1.4 L4.7,1.4 L4.7,7 L8.2,7 L9.1,4.6 L9.6,4.6 L9.6,10.2 L9.1,10.2 L8.2,7.9 L4.7,7.9 L4.7,13.25 L9.3,13.25 C11.2,13.25 11.9,12.4 12.5,10.3 L13.2,10.4 L13,14.6 L0.1,14.6 L0.1,13.95 L1.9,13.4 L1.9,1.2 L0.2,0.75 Z" fill="#f1641e"/></svg>
<div class="t" style="left:343.30px;top:803.81px;font-size:14px;color:#111827;letter-spacing:0.534px;-webkit-text-stroke:0.2px currentColor;">123456789</div>
<div class="t" style="left:474.50px;top:803.81px;font-size:14px;color:#6b7280;letter-spacing:0.455px;">6/20/2025, 1:50:42 PM</div>
<div class="a" style="left:668px;top:801px;width:67px;height:24px;background:#dbeafe;border-radius:12px;"></div>
<div class="t" style="left:676.20px;top:806.15px;font-size:12px;color:#1e40af;letter-spacing:-0.229px;font-weight:700;">SHIPPED</div>
<div class="a" style="left:796px;top:801px;width:58px;height:24px;background:#dcfce7;border-radius:12px;"></div>
<div class="t" style="left:804.20px;top:806.15px;font-size:12px;color:#166534;letter-spacing:-0.055px;font-weight:700;">Printed</div>
<div class="a" style="left:924px;top:801px;width:69px;height:24px;background:#dcfce7;border-radius:12px;"></div>
<div class="t" style="left:932.00px;top:806.15px;font-size:12px;color:#166534;letter-spacing:0.008px;font-weight:700;">Available</div>
<div class="t" style="left:1052.20px;top:803.91px;font-size:14px;color:#111827;letter-spacing:0.485px;">John Doe</div>
<svg class="a" style="left:1406px;top:804.3px" width="16" height="16" viewBox="0 0 24 24" fill="none" stroke="#2563eb" stroke-width="1.5" stroke-linecap="round" stroke-linejoin="round"><path d="M3 16.5v2.25A2.25 2.25 0 0 0 5.25 21h13.5A2.25 2.25 0 0 0 21 18.75V16.5M16.5 12 12 16.5m0 0L7.5 12m4.5 4.5V3"/></svg>
<svg class="a" style="left:1442px;top:803.3px" width="16" height="16" viewBox="0 0 16 16" fill="none" stroke="#4b5563" stroke-width="1.05"><rect x="4.5" y="2.5" width="7" height="3"/><path d="M4.5,11.3 H3.4 A1.7,1.7 0 0 1 1.7,9.6 V7.2 A1.7,1.7 0 0 1 3.4,5.5 H12.6 A1.7,1.7 0 0 1 14.3,7.2 V9.6 A1.7,1.7 0 0 1 12.6,11.3 H11.5"/><rect x="4.5" y="9" width="7" height="5.6" rx="0.6"/></svg>
<svg class="a" style="left:1478px;top:804px" width="16" height="16" viewBox="0 0 24 24" fill="none" stroke="#ca8a04" stroke-width="1.5" stroke-linecap="round" stroke-linejoin="round"><path d="m9.75 9.75 4.5 4.5m0-4.5-4.5 4.5M21 12a9 9 0 1 1-18 0 9 9 0 0 1 18 0Z"/></svg>
<svg class="a" style="left:1514px;top:804px" width="16" height="16" viewBox="0 0 24 24" fill="none" stroke="#dc2626" stroke-width="1.5" stroke-linecap="round" stroke-linejoin="round"><path d="m14.74 9-.346 9m-4.788 0L9.26 9m9.968-3.21c.342.052.682.107 1.022.166m-1.022-.165L18.16 19.673a2.25 2.25 0 0 1-2.244 2.077H8.084a2.25 2.25 0 0 1-2.244-2.077L4.772 5.79m14.456 0a48.108 48.108 0 0 0-3.478-.397m-12 .562c.34-.059.68-.114 1.022-.165m0 0a48.11 48.11 0 0 1 3.478-.397m7.5 0v-.916c0-1.18-.91-2.164-2.09-2.201a51.964 51.964 0 0 0-3.32 0c-1.18.037-2.09 1.022-2.09 2.201v.916m7.5 0a48.667 48.667 0 0 0-7.5 0"/></svg>
<div class="a" style="left:1613px;top:69px;width:7px;height:820px;background:#f3f4f6;"></div>
<svg class="a" style="left:1613px;top:69px" width="7" height="10" viewBox="0 0 7 10"><path d="M2 7 L4.5 2.7 L7 7 Z" fill="#9ca3af"/></svg>
<div class="a" style="left:1615px;top:81px;width:8px;height:290px;background:#9ca3af;border-radius:4px;"></div>
<div class="a" style="left:0px;top:69px;width:253px;height:820px;background:#fff;"></div>
<div class="a" style="left:14px;top:129px;width:223px;height:36px;background:#dbeafe;border-radius:8px;"></div>
<svg class="a" style="left:26px;top:93px" width="20" height="20" viewBox="0 0 24 24" fill="none" stroke="#374151" stroke-width="1.5" stroke-linecap="round" stroke-linejoin="round"><path d="m2.25 12 8.954-8.955c.44-.439 1.152-.439 1.591 0L21.75 12M4.5 9.75v10.125c0 .621.504 1.125 1.125 1.125H9.75v-4.875c0-.621.504-1.125 1.125-1.125h2.25c.621 0 1.125.504 1.125 1.125V21h4.125c.621 0 1.125-.504 1.125-1.125V9.75M8.25 21h8.25"/></svg>
<div class="t" style="left:58.50px;top:94.91px;font-size:14px;color:#374151;letter-spacing:0.357px;-webkit-text-stroke:0.2px currentColor;">Home</div>
<svg class="a" style="left:26px;top:137px" width="20" height="20" viewBox="0 0 24 24" fill="none" stroke="#1d4ed8" stroke-width="1.5" stroke-linecap="round" stroke-linejoin="round"><path d="m21 7.5-9-5.25L3 7.5m18 0-9 5.25m9-5.25v9l-9 5.25M3 7.5l9 5.25M3 7.5v9l9 5.25m0-9v9"/></svg>
<div class="t" style="left:58.50px;top:138.91px;font-size:14px;color:#1d4ed8;letter-spacing:0.387px;-webkit-text-stroke:0.2px currentColor;">Orders</div>
<svg class="a" style="left:26px;top:181px" width="20" height="20" viewBox="0 0 24 24" fill="none" stroke="#374151" stroke-width="1.5" stroke-linecap="round" stroke-linejoin="round"><path d="M6.72 13.829c-.24.03-.48.062-.72.096m.72-.096a42.415 42.415 0 0 1 10.56 0m-10.56 0L6.34 18m10.94-4.171c.24.03.48.062.72.096m-.72-.096L17.66 18m0 0 .229 2.523a1.125 1.125 0 0 1-1.12 1.227H7.231c-.662 0-1.18-.568-1.12-1.227L6.34 18m11.318 0h1.091A2.25 2.25 0 0 0 21 15.75V9.456c0-1.081-.768-2.015-1.837-2.175a48.055 48.055 0 0 0-1.913-.247M6.34 18H5.25A2.25 2.25 0 0 1 3 15.75V9.456c0-1.081.768-2.015 1.837-2.175a48.041 48.041 0 0 1 1.913-.247m10.5 0a48.536 48.536 0 0 0-10.5 0m10.5 0V3.375c0-.621-.504-1.125-1.125-1.125h-8.25c-.621 0-1.125.504-1.125 1.125v3.659M18 10.5h.008v.008H18V10.5Zm-3 0h.008v.008H15V10.5Z"/></svg>
<div class="t" style="left:58.50px;top:182.91px;font-size:14px;color:#374151;letter-spacing:0.377px;-webkit-text-stroke:0.2px currentColor;">Printer Status</div>
<svg class="a" style="left:26px;top:225px" width="20" height="20" viewBox="0 0 24 24" fill="none" stroke="#374151" stroke-width="1.5" stroke-linecap="round" stroke-linejoin="round"><path d="M10.5 6h9.75M10.5 6a1.5 1.5 0 1 1-3 0m3 0a1.5 1.5 0 1 0-3 0M3.75 6H7.5m3 12h9.75m-9.75 0a1.5 1.5 0 0 1-3 0m3 0a1.5 1.5 0 0 0-3 0m-3.75 0H7.5m9-6h3.75m-3.75 0a1.5 1.5 0 0 1-3 0m3 0a1.5 1.5 0 0 0-3 0m-9.75 0h9.75"/></svg>
<div class="t" style="left:58.50px;top:226.91px;font-size:14px;color:#374151;letter-spacing:0.597px;-webkit-text-stroke:0.2px currentColor;">Configuration</div>
<svg class="a" style="left:26px;top:269px" width="20" height="20" viewBox="0 0 24 24" fill="none" stroke="#374151" stroke-width="1.5" stroke-linecap="round" stroke-linejoin="round"><path d="M19.5 14.25v-2.625a3.375 3.375 0 0 0-3.375-3.375h-1.5A1.125 1.125 0 0 1 13.5 7.125v-1.5a3.375 3.375 0 0 0-3.375-3.375H8.25m.75 12 3 3m0 0 3-3m-3 3v-6m-1.5-9H5.625c-.621 0-1.125.504-1.125 1.125v17.25c0 .621.504 1.125 1.125 1.125h12.75c.621 0 1.125-.504 1.125-1.125V11.25a9 9 0 0 0-9-9Z"/></svg>
<div class="t" style="left:58.50px;top:270.91px;font-size:14px;color:#374151;letter-spacing:0.329px;-webkit-text-stroke:0.2px currentColor;">Export Data</div>
<div class="a" style="left:0px;top:0px;width:1620px;height:69px;background:#2563eb;"></div>
<div class="a" style="left:0px;top:68px;width:1620px;height:1px;background:#1a55e6;"></div>
<svg class="a" style="left:0;top:0" width="60" height="69"><g stroke="#fff" stroke-width="2" stroke-linecap="round"><line x1="34" y1="28" x2="46" y2="28"/><line x1="34" y1="33" x2="46" y2="33"/><line x1="34" y1="38" x2="46" y2="38"/></g></svg>
<svg class="a" style="left:0;top:0" width="160" height="69" viewBox="0 0 160 69"><path d="M111.9,17.4 L138,17.4 A4.6,5.6 0 0 1 142.7,23 L105.7,23.3 Z" fill="#1d4ed8"/><path d="M98.6,30 L102,30 A6,9.15 0 0 1 102,48.3 L74.8,48.3 L84.7,42.1 L100.2,42.1 A3,3.1 0 0 0 100.2,35.9 L92.7,35.9 Z" fill="#1d4ed8"/><path d="M86.5,17.4 L111.9,17.4 L105.7,23.3 L87.5,23.3 A3.35,3.35 0 0 0 87.5,30 L98.6,30 L92.7,35.9 L86.5,35.9 A8.3,9.25 0 0 1 86.5,17.4 Z" fill="#000"/><path d="M108.1,48.3 L114.9,25.1 L121.7,24.8 L119.3,36 Q117.5,45.5 108.1,48.3 Z" fill="#000"/><path d="M119.3,30 L132.8,30 L142.7,22.9 C143.5,24 143.4,27 143,29 C142,35 138,38.1 133,38.1 L118.9,38.1 Z" fill="#000"/></svg>
<div class="t" style="left:157.00px;top:21.03px;font-size:20.6px;color:#fff;letter-spacing:-0.389px;font-weight:700;">SP Connector</div>
<svg class="a" style="left:1427px;top:22.7px" width="20" height="20" viewBox="0 0 24 24" fill="none" stroke="#fff" stroke-width="1.5" stroke-linecap="round" stroke-linejoin="round"><path d="M21.752 15.002A9.72 9.72 0 0 1 18 15.75c-5.385 0-9.75-4.365-9.75-9.75 0-1.33.266-2.597.748-3.752A9.753 9.753 0 0 0 3 11.25C3 16.635 7.365 21 12.75 21a9.753 9.753 0 0 0 9.002-5.998Z"/></svg>
<svg class="a" style="left:1471px;top:21px" width="24" height="24" viewBox="0 0 24 24" fill="none" stroke="#fff" stroke-width="1.5" stroke-linecap="round" stroke-linejoin="round"><path d="M17.982 18.725A7.488 7.488 0 0 0 12 15.75a7.488 7.488 0 0 0-5.982 2.975m11.963 0a9 9 0 1 0-11.963 0m11.963 0A8.966 8.966 0 0 1 12 21a8.966 8.966 0 0 1-5.982-2.275M15 9.75a3 3 0 1 1-6 0 3 3 0 0 1 6 0Z"/></svg>
<div class="t" style="left:1504.00px;top:25.11px;font-size:14px;color:#fff;letter-spacing:0.442px;-webkit-text-stroke:0.5px #fff;">John Doe</div>
<svg class="a" style="left:1575.8px;top:25.5px" width="14.5" height="14.5" viewBox="0 0 24 24" fill="none" stroke="#fff" stroke-width="1.7" stroke-linecap="round" stroke-linejoin="round"><path d="m19.5 8.25-7.5 7.5-7.5-7.5"/></svg>
<div class="a" style="left:0px;top:837px;width:1620px;height:52px;background:#fff;border-top:1px solid #e5e7eb;box-sizing:border-box;"></div>
<div class="t" style="left:22.50px;top:856.11px;font-size:14px;color:#4b5563;letter-spacing:0.333px;">Help Center</div>
<div class="t" style="left:125.60px;top:856.11px;font-size:14px;color:#4b5563;letter-spacing:0.288px;">System Status</div>
<div class="t" style="left:244.50px;top:856.11px;font-size:14px;color:#4b5563;letter-spacing:0.321px;">Privacy Policy</div>
<div class="t" style="left:361.30px;top:856.11px;font-size:14px;color:#4b5563;letter-spacing:0.492px;">Terms of Service</div>
<div class="t" style="left:498.10px;top:856.11px;font-size:14px;color:#4b5563;letter-spacing:0.295px;">Refund Policy</div>
<div class="t" style="left:1242.20px;top:856.11px;font-size:14px;color:#4b5563;letter-spacing:0.299px;">Export Data</div>
<div class="t" style="left:1335.60px;top:856.11px;font-size:14px;color:#4b5563;letter-spacing:0.550px;">Delete Account</div>
<div class="t" style="left:1454.00px;top:856.11px;font-size:14px;color:#6b7280;letter-spacing:0.483px;">© 2025 SP Connector</div>
</body></html>
